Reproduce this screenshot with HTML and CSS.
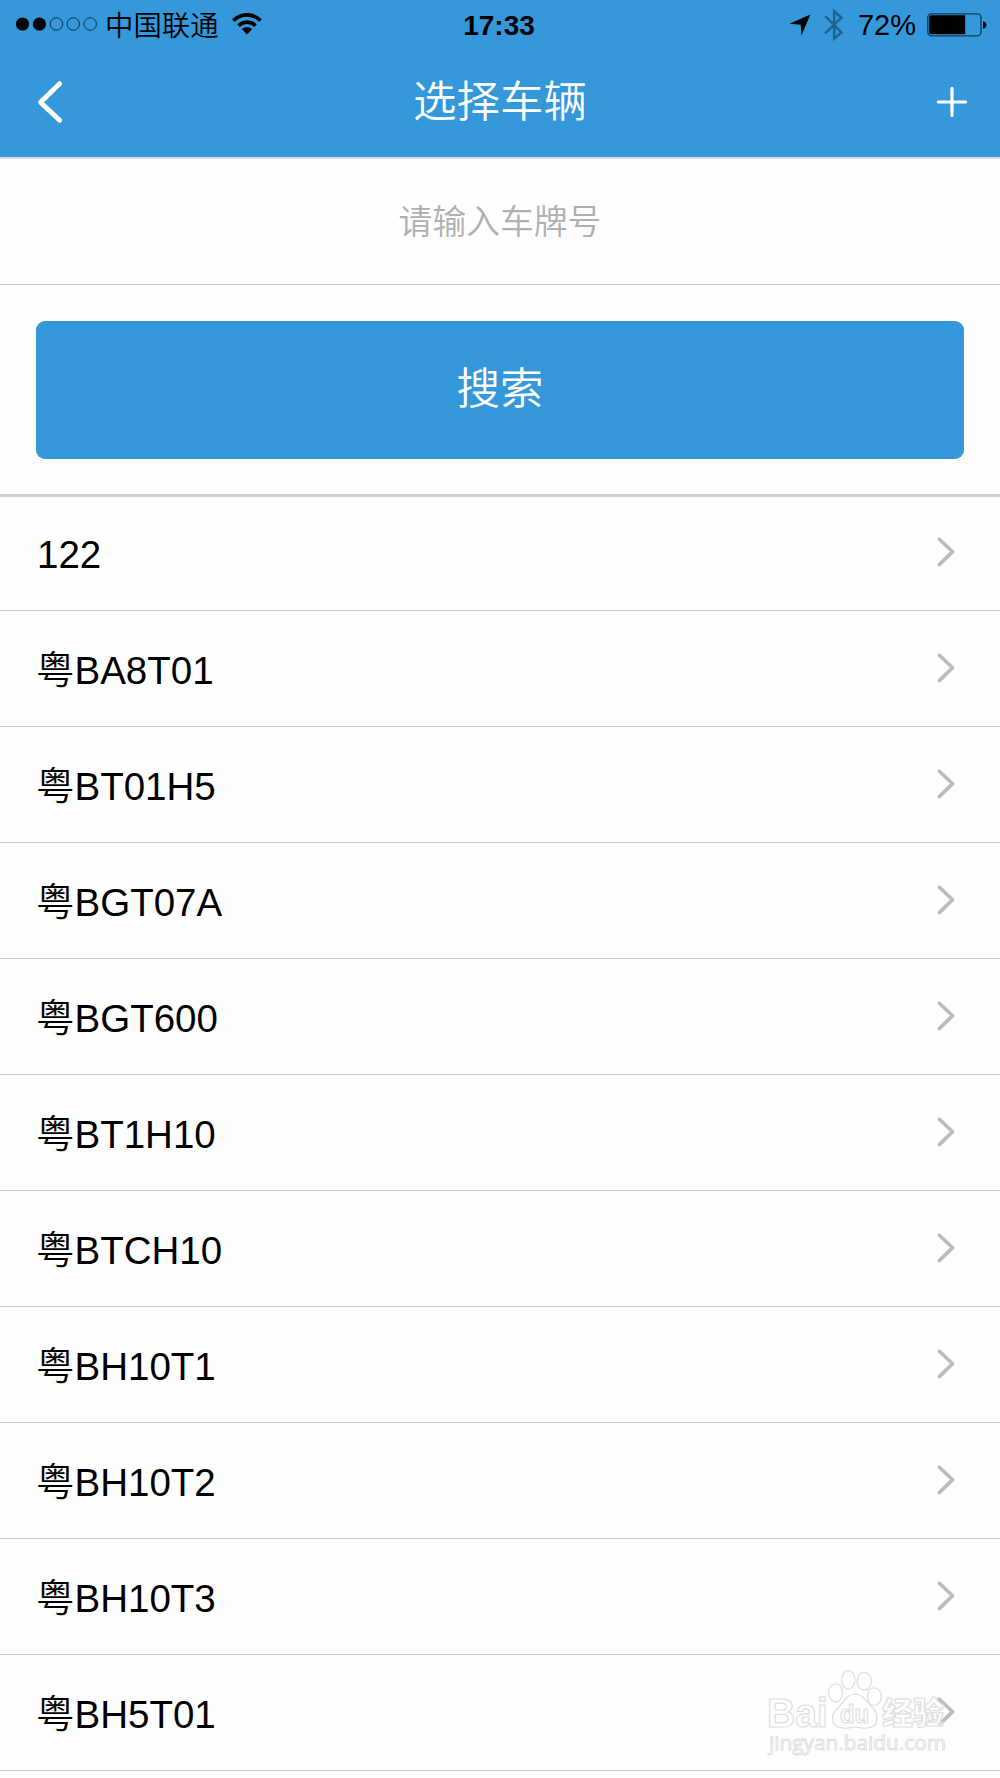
FILE: index.html
```html
<!DOCTYPE html>
<html lang="zh-CN">
<head>
  <meta charset="UTF-8" />
  <meta name="viewport" content="width=device-width, initial-scale=1.0"/>
  <title>选择车辆</title>
  <link rel="stylesheet" href="styles.css">
</head>
<body>
  <svg class="defs" width="0" height="0">
    <symbol id="arrow" viewBox="0 0 20 32">
      <path d="M3.3 3.2 L16.6 15.8 L3.3 28.6" fill="none" stroke="#bbbbbb" stroke-width="3.6" stroke-linecap="round" stroke-linejoin="round"/>
    </symbol>
  </svg>

  <header class="header">
    <div class="status">
      <div class="status-left">
        <svg class="signal" width="84" height="16" viewBox="0 0 84 16">
          <circle cx="7.5" cy="8" r="6.6"/>
          <circle cx="24.4" cy="8" r="6.6"/>
          <g fill="none" stroke="#0c2e47" stroke-width="1">
            <circle cx="41.4" cy="8" r="6.2"/>
            <circle cx="58.3" cy="8" r="6.2"/>
            <circle cx="75.2" cy="8" r="6.2"/>
          </g>
        </svg>
        <span class="carrier">中国联通</span>
        <svg class="wifi" width="30" height="22" viewBox="0 0 30 22">
          <g fill="none" stroke="#000" stroke-width="3.7">
            <path d="M1.4 7.6 C9 -0.1 21 -0.1 28.6 7.6"/>
            <path d="M6.5 12.7 C11.3 8 18.7 8 23.5 12.7"/>
          </g>
          <path d="M9.8 16.1 C12.8 13.3 17.2 13.3 20.2 16.1 L15 21.4 Z"/>
        </svg>
      </div>
      <div class="time">17:33</div>
      <div class="status-right">
        <svg class="location" width="22" height="22" viewBox="0 0 22 22">
          <path d="M21.4 0.6 L12.4 21.4 L11.7 10.8 L0.4 9.8 Z"/>
        </svg>
        <svg class="bluetooth" width="20" height="34" viewBox="0 0 20 34">
          <path d="M1.2 8.2 L17.4 24.4 L10.2 30.6 L10.2 3.4 L17.4 9.6 L1.2 25.4" fill="none" stroke="#20638f" stroke-width="2.5"/>
        </svg>
        <span class="percent">72%</span>
        <svg class="battery" width="60" height="24" viewBox="0 0 60 24">
          <rect x="0.8" y="0.8" width="53.2" height="22" rx="3.6" fill="none" stroke="#0f3a59" stroke-width="1.3"/>
          <path d="M4.3 2.3 H38.2 V21.3 H4.3 Q2.2 21.3 2.2 19.2 V4.4 Q2.2 2.3 4.3 2.3 Z"/>
          <path d="M56 8.3 Q59.4 9 59.4 12 Q59.4 15 56 15.8 Z"/>
        </svg>
      </div>
    </div>
    <div class="nav">
      <svg class="back" width="28" height="46" viewBox="0 0 28 46">
        <path d="M23.6 4.7 L4.5 23.2 L23.6 41.2" fill="none" stroke="#fff" stroke-width="4.9" stroke-linecap="round" stroke-linejoin="round"/>
      </svg>
      <h1 class="title">选择车辆</h1>
      <svg class="add" width="32" height="32" viewBox="0 0 32 32">
        <path d="M2.4 16 H29.6 M16 2.4 V29.6" fill="none" stroke="#fff" stroke-width="3.2" stroke-linecap="round"/>
      </svg>
    </div>
  </header>

  <form class="search">
    <input class="search-input" type="text" placeholder="请输入车牌号" />
    <div class="search-action">
      <button class="search-button" type="button">搜索</button>
    </div>
  </form>

  <ul class="cars">
    <li class="car"><span class="plate plate-num">122</span><svg class="arrow"><use href="#arrow"/></svg></li>
    <li class="car"><span class="plate">粤BA8T01</span><svg class="arrow"><use href="#arrow"/></svg></li>
    <li class="car"><span class="plate">粤BT01H5</span><svg class="arrow"><use href="#arrow"/></svg></li>
    <li class="car"><span class="plate">粤BGT07A</span><svg class="arrow"><use href="#arrow"/></svg></li>
    <li class="car"><span class="plate">粤BGT600</span><svg class="arrow"><use href="#arrow"/></svg></li>
    <li class="car"><span class="plate">粤BT1H10</span><svg class="arrow"><use href="#arrow"/></svg></li>
    <li class="car"><span class="plate">粤BTCH10</span><svg class="arrow"><use href="#arrow"/></svg></li>
    <li class="car"><span class="plate">粤BH10T1</span><svg class="arrow"><use href="#arrow"/></svg></li>
    <li class="car"><span class="plate">粤BH10T2</span><svg class="arrow"><use href="#arrow"/></svg></li>
    <li class="car"><span class="plate">粤BH10T3</span><svg class="arrow"><use href="#arrow"/></svg></li>
    <li class="car"><span class="plate">粤BH5T01</span><svg class="arrow"><use href="#arrow"/></svg></li>
  </ul>

  <svg class="watermark" width="190" height="92" viewBox="0 0 190 92">
    <g class="watermark-text">
      <text class="wm-logo" x="3" y="58.5" textLength="61" lengthAdjust="spacingAndGlyphs">Bai</text>
      <text class="wm-cn" x="118" y="56" textLength="62">经验</text>
      <text class="wm-url" x="5" y="82" textLength="177" lengthAdjust="spacingAndGlyphs">jingyan.baidu.com</text>
    </g>
    <g class="watermark-paw">
      <ellipse cx="71.6" cy="24.8" rx="7" ry="9"/>
      <ellipse cx="84.3" cy="12" rx="6.6" ry="9.3"/>
      <ellipse cx="100.2" cy="13.2" rx="7" ry="9"/>
      <ellipse cx="110.4" cy="28.7" rx="7" ry="8.8"/>
      <path d="M91 26 C98 26 102 33 107 38 C115 45 116 60 103 60 C98 61 95 59 91 59 C87 59 84 61 79 60 C66 59 66 47 74 40 C80 34 83 26 91 26 Z"/>
    </g>
    <text class="wm-du" x="76" y="54.5" textLength="29" lengthAdjust="spacingAndGlyphs">du</text>
  </svg>
</body>
</html>
```
FILE: styles.css
```css
* {
  box-sizing: border-box;
}
body {
  margin: 0;
  height: 1778px;
  overflow: hidden;
  position: relative;
  background: #fefefe;
  color: #000;
  font-family: "Liberation Sans", "Noto Sans CJK SC", sans-serif;
  font-weight: 300;
}
svg {
  display: block;
  flex: none;
}
.defs {
  position: absolute;
}

/* header */
.header {
  height: 159px;
  background: #3498db;
  border-bottom: 2px solid #dcdfe2;
}
.status {
  height: 50px;
  padding: 0 13px 0 15px;
  display: grid;
  grid-template-columns: 1fr auto 1fr;
  align-items: center;
}
.status-left, .status-right {
  display: flex;
  align-items: center;
}
.status-right {
  justify-content: flex-end;
}
.signal {
  margin-top: -2px;
}
.carrier {
  font-size: 28.4px;
  font-weight: 350;
  line-height: 40px;
  margin-left: 6px;
  padding-top: 2px;
}
.wifi {
  margin: -3px 0 0 13px;
}
.time {
  font-size: 28px;
  font-weight: bold;
  line-height: 40px;
  padding: 2px 4px 0 0;
}
.location {
  margin-right: 13px;
}
.bluetooth {
  margin-right: 14px;
}
.percent {
  font-size: 29px;
  line-height: 40px;
  margin-right: 11px;
}
.nav {
  height: 107px;
  padding: 0 32px 4px 36px;
  display: flex;
  align-items: center;
  justify-content: space-between;
}
.title {
  margin: 0;
  font-size: 43.5px;
  font-weight: 350;
  line-height: 60px;
  color: #fff;
}

/* search */
.search-input {
  display: block;
  width: 100%;
  height: 126px;
  padding: 1px 0 0;
  border: none;
  border-bottom: 1px solid #c4c4c4;
  background: none;
  font: inherit;
  font-size: 33.8px;
  font-weight: 350;
  text-align: center;
  outline: none;
}
.search-input::placeholder {
  color: #b0b0b0;
}
.search-action {
  height: 209px;
  padding: 36px 36px 0;
}
.search-button {
  display: block;
  width: 100%;
  height: 138px;
  padding: 0 0 9px;
  border: none;
  border-radius: 9px;
  background: #3498db;
  color: #fff;
  font: inherit;
  font-size: 43.5px;
  font-weight: 350;
}

/* car list */
.cars {
  margin: 0;
  padding: 0;
  list-style: none;
  border-top: 3px solid #cfd0d3;
}
.car {
  height: 116px;
  padding: 0 44px 1px 36px;
  border-bottom: 1px solid #c8c7cc;
  display: flex;
  align-items: center;
  justify-content: space-between;
  font-size: 38.5px;
  font-weight: 350;
  line-height: 52px;
}
.car:first-child {
  height: 114px;
  padding-bottom: 4px;
}
.plate {
  padding-top: 6px;
}
.plate-num {
  padding-left: 1px;
}
.arrow {
  width: 20px;
  height: 32px;
}

/* watermark */
.watermark {
  position: absolute;
  left: 764px;
  top: 1668px;
}
.watermark-text text, .watermark-paw, .wm-du {
  fill: #fff;
  fill-opacity: 0.6;
  stroke: #dedede;
  stroke-width: 1.2;
}
.watermark-text .wm-url {
  font-size: 20px;
  font-family: "Open Sans", sans-serif;
  font-weight: 400;
  stroke-width: 0.9;
}
.wm-logo {
  font-size: 41px;
  font-weight: bold;
}
.wm-cn {
  font-size: 31px;
  font-weight: 900;
}
.wm-du {
  font-size: 26px;
  font-weight: bold;
}
```
